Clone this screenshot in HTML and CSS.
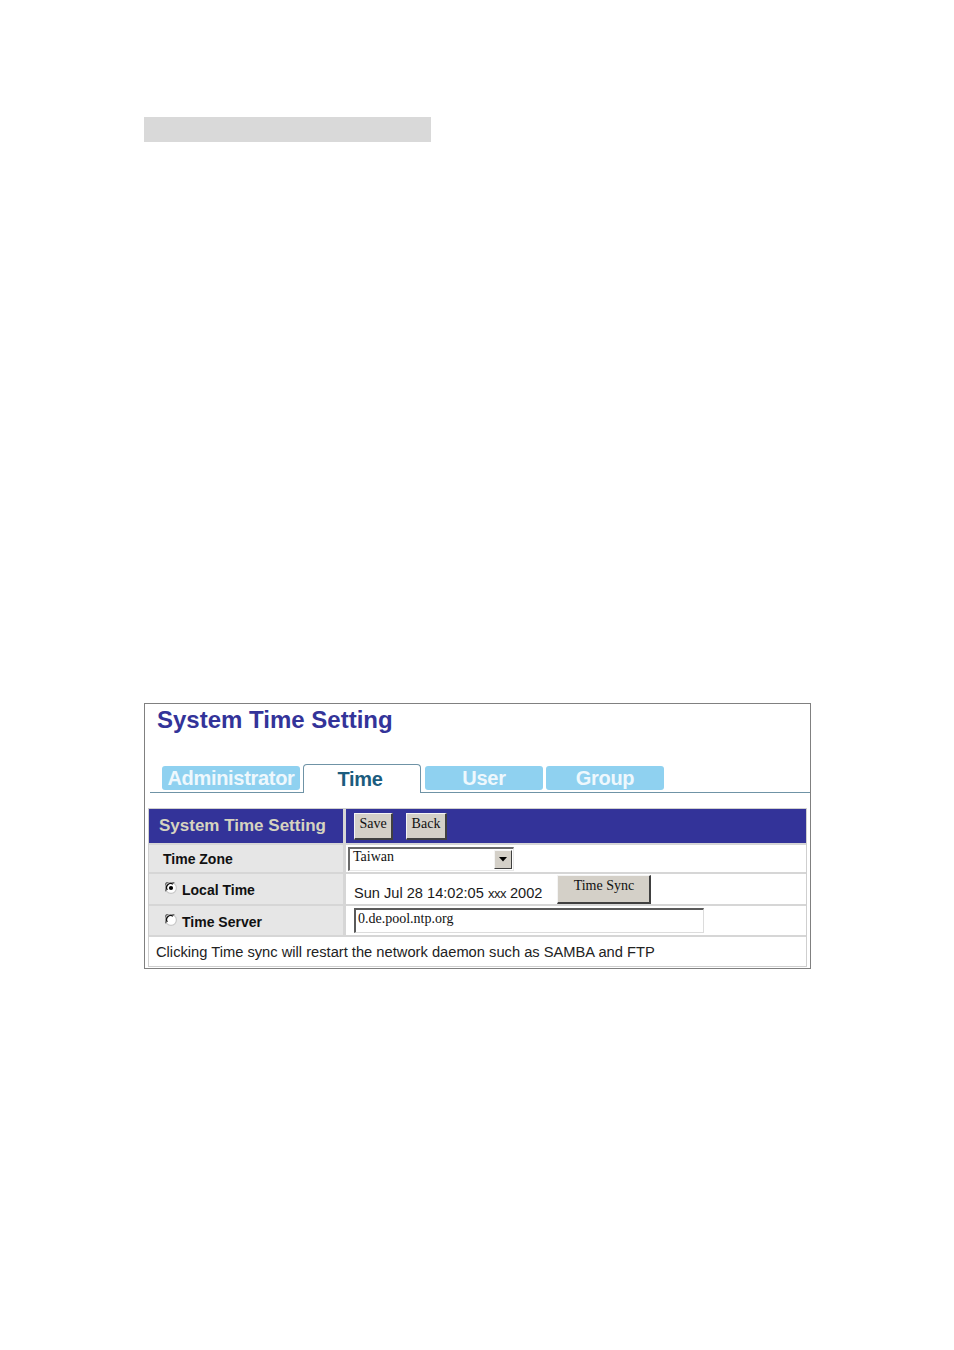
FILE: index.html
```html
<!DOCTYPE html>
<html>
<head>
<meta charset="utf-8">
<title>System Time Setting</title>
<link rel="stylesheet" href="styles.css">
</head>
<body>
<div class="page">
  <div class="caption-bar"></div>
  <div class="shot">
    <h1 class="title">System Time Setting</h1>
    <div class="tabs">
      <div class="tab tab-admin">Administrator</div>
      <div class="tab tab-active">Time</div>
      <div class="tab tab-user">User</div>
      <div class="tab tab-group">Group</div>
    </div>
    <div class="grid">
      <div class="cell head-left">System Time Setting</div>
      <div class="cell head-right">
        <span class="btn btn-save">Save</span>
        <span class="btn btn-back">Back</span>
      </div>

      <div class="cell label">Time Zone</div>
      <div class="cell value value-zone">
        <div class="select">
          <span class="select-text">Taiwan</span>
          <span class="select-arrow"><svg width="8" height="5" viewBox="0 0 8 5"><path d="M0 0H8L4 4.5Z" fill="#000"/></svg></span>
        </div>
      </div>

      <div class="cell label label-radio">
        <svg class="radio" width="12" height="12" viewBox="0 0 12 12">
          <circle cx="6" cy="6" r="5.4" fill="#fff" stroke="#c8c8c8" stroke-width="1.2"/>
          <path d="M1.2 9.2 A5.4 5.4 0 0 1 9.2 1.2" fill="none" stroke="#707070" stroke-width="1.4"/>
          <path d="M2.3 8 A4.1 4.1 0 0 1 8 2.3" fill="none" stroke="#111" stroke-width="1.3"/>
          <circle cx="6" cy="6" r="2.1" fill="#000"/>
        </svg>
        <span>Local Time</span>
      </div>
      <div class="cell value value-local">
        <span class="date">Sun Jul 28 14:02:05 <span class="xxx">xxx</span> 2002</span>
        <span class="btn btn-sync">Time Sync</span>
      </div>

      <div class="cell label label-radio">
        <svg class="radio" width="12" height="12" viewBox="0 0 12 12">
          <circle cx="6" cy="6" r="5.4" fill="#fff" stroke="#c8c8c8" stroke-width="1.2"/>
          <path d="M1.2 9.2 A5.4 5.4 0 0 1 9.2 1.2" fill="none" stroke="#707070" stroke-width="1.4"/>
          <path d="M2.3 8 A4.1 4.1 0 0 1 8 2.3" fill="none" stroke="#111" stroke-width="1.3"/>
        </svg>
        <span>Time Server</span>
      </div>
      <div class="cell value value-server">
        <div class="text-input">0.de.pool.ntp.org</div>
      </div>

      <div class="cell note">Clicking Time sync will restart the network daemon such as SAMBA and FTP</div>
    </div>
  </div>
</div>
</body>
</html>
```

FILE: styles.css
```css
html, body {
  margin: 0;
  padding: 0;
  background: #ffffff;
}

body {
  font-family: "Liberation Sans", Arial, sans-serif;
  color: #111;
}

.page {
  padding-left: 144px;
  padding-top: 117px;
}

.caption-bar {
  width: 287px;
  height: 25px;
  background: #d9d9d9;
}

.shot {
  margin-top: 561px;
  width: 665px;
  height: 264px;
  border: 1px solid #808080;
  background: #fff;
  display: flex;
  flex-direction: column;
}

.title {
  margin: 2px 0 0 0;
  padding-left: 12px;
  font-size: 24px;
  line-height: 27px;
  font-weight: bold;
  color: #333399;
}

.tabs {
  margin-top: 31px;
  margin-left: 5px;
  padding-left: 12px;
  height: 28px;
  border-bottom: 1px solid #6f93a6;
  display: flex;
  align-items: flex-end;
  gap: 3px;
}

.tab {
  font-size: 20px;
  font-weight: bold;
  text-align: center;
  letter-spacing: -0.3px;
}

.tab-admin, .tab-user, .tab-group {
  height: 24px;
  line-height: 24px;
  margin-bottom: 2px;
  background: #8fd1f0;
  color: #eef8fd;
  border-radius: 3px;
}

.tab-admin { width: 138px; }
.tab-user { width: 118px; margin-left: 1px; }
.tab-group { width: 118px; }

.tab-active {
  width: 116px;
  height: 28px;
  line-height: 29px;
  margin-bottom: -1px;
  background: #fff;
  color: #1b5c7e;
  border: 1px solid #6f93a6;
  border-bottom: none;
  border-radius: 4px 4px 0 0;
  text-indent: -4px;
}

.grid {
  margin-top: 15px;
  margin-left: 3px;
  width: 657px;
  display: grid;
  grid-template-columns: 194px 1fr;
  grid-template-rows: 34px 27px 30px 29px 29px;
  gap: 2px 3px;
  background: #d6d6d6;
  border: 1px solid #cfcfcf;
}

.cell {
  display: flex;
  align-items: center;
  background: #fff;
}

.head-left {
  background: #333399;
  color: #d6d3c0;
  font-size: 17px;
  font-weight: bold;
  padding-left: 10px;
}

.head-right {
  background: #333399;
  padding-left: 8px;
  gap: 13px;
}

.btn {
  display: inline-flex;
  align-items: center;
  justify-content: center;
  box-sizing: border-box;
  background: #d4d0c8;
  border-top: 1px solid #f4f4f4;
  border-left: 1px solid #f4f4f4;
  border-right: 2px solid #404040;
  border-bottom: 2px solid #404040;
  font-family: "Liberation Serif", "Times New Roman", serif;
  font-size: 14px;
  color: #111;
}

.btn-save { width: 39px; height: 27px; padding-bottom: 3px; }
.btn-back { width: 41px; height: 27px; padding-bottom: 3px; }

.label {
  background: #e6e6e6;
  font-size: 14px;
  font-weight: bold;
  padding-left: 14px;
}

.label-radio {
  padding-left: 16px;
  gap: 5px;
  padding-top: 2px;
}

.radio {
  margin-top: -4px;
  flex: none;
}

.value-zone {
  padding-left: 2px;
}

.select {
  box-sizing: border-box;
  width: 166px;
  height: 24px;
  border-top: 2px solid #6a6a6a;
  border-left: 2px solid #6a6a6a;
  border-right: 1px solid #e8e8e8;
  border-bottom: 1px solid #e8e8e8;
  background: #fff;
  display: flex;
  align-items: center;
  justify-content: space-between;
  padding-left: 3px;
  padding-right: 1px;
}

.select-text {
  font-family: "Liberation Serif", "Times New Roman", serif;
  font-size: 14px;
  margin-top: -4px;
}

.select-arrow {
  box-sizing: border-box;
  width: 18px;
  height: 19px;
  background: #d4d0c8;
  border-top: 1px solid #f4f4f4;
  border-left: 1px solid #f4f4f4;
  border-right: 1px solid #404040;
  border-bottom: 1px solid #404040;
  display: flex;
  align-items: center;
  justify-content: center;
}

.value-local {
  padding-left: 8px;
  align-items: stretch;
}

.date {
  align-self: flex-end;
  padding-bottom: 3px;
  font-size: 14.6px;
  color: #1a1a1a;
}

.xxx {
  font-size: 13px;
  letter-spacing: -0.5px;
}

.btn-sync {
  width: 94px;
  height: 29px;
  margin-left: 15px;
  margin-top: 1px;
  padding-bottom: 6px;
}

.value-server {
  padding-left: 8px;
}

.text-input {
  box-sizing: border-box;
  width: 350px;
  height: 25px;
  border-top: 2px solid #5a5a5a;
  border-left: 2px solid #5a5a5a;
  border-right: 1px solid #dcdcdc;
  border-bottom: 1px solid #dcdcdc;
  padding-left: 2px;
  font-family: "Liberation Serif", "Times New Roman", serif;
  font-size: 14px;
  line-height: 17px;
  color: #111;
}

.note {
  grid-column: 1 / span 2;
  padding-left: 7px;
  font-size: 14.7px;
  color: #222;
}
```
